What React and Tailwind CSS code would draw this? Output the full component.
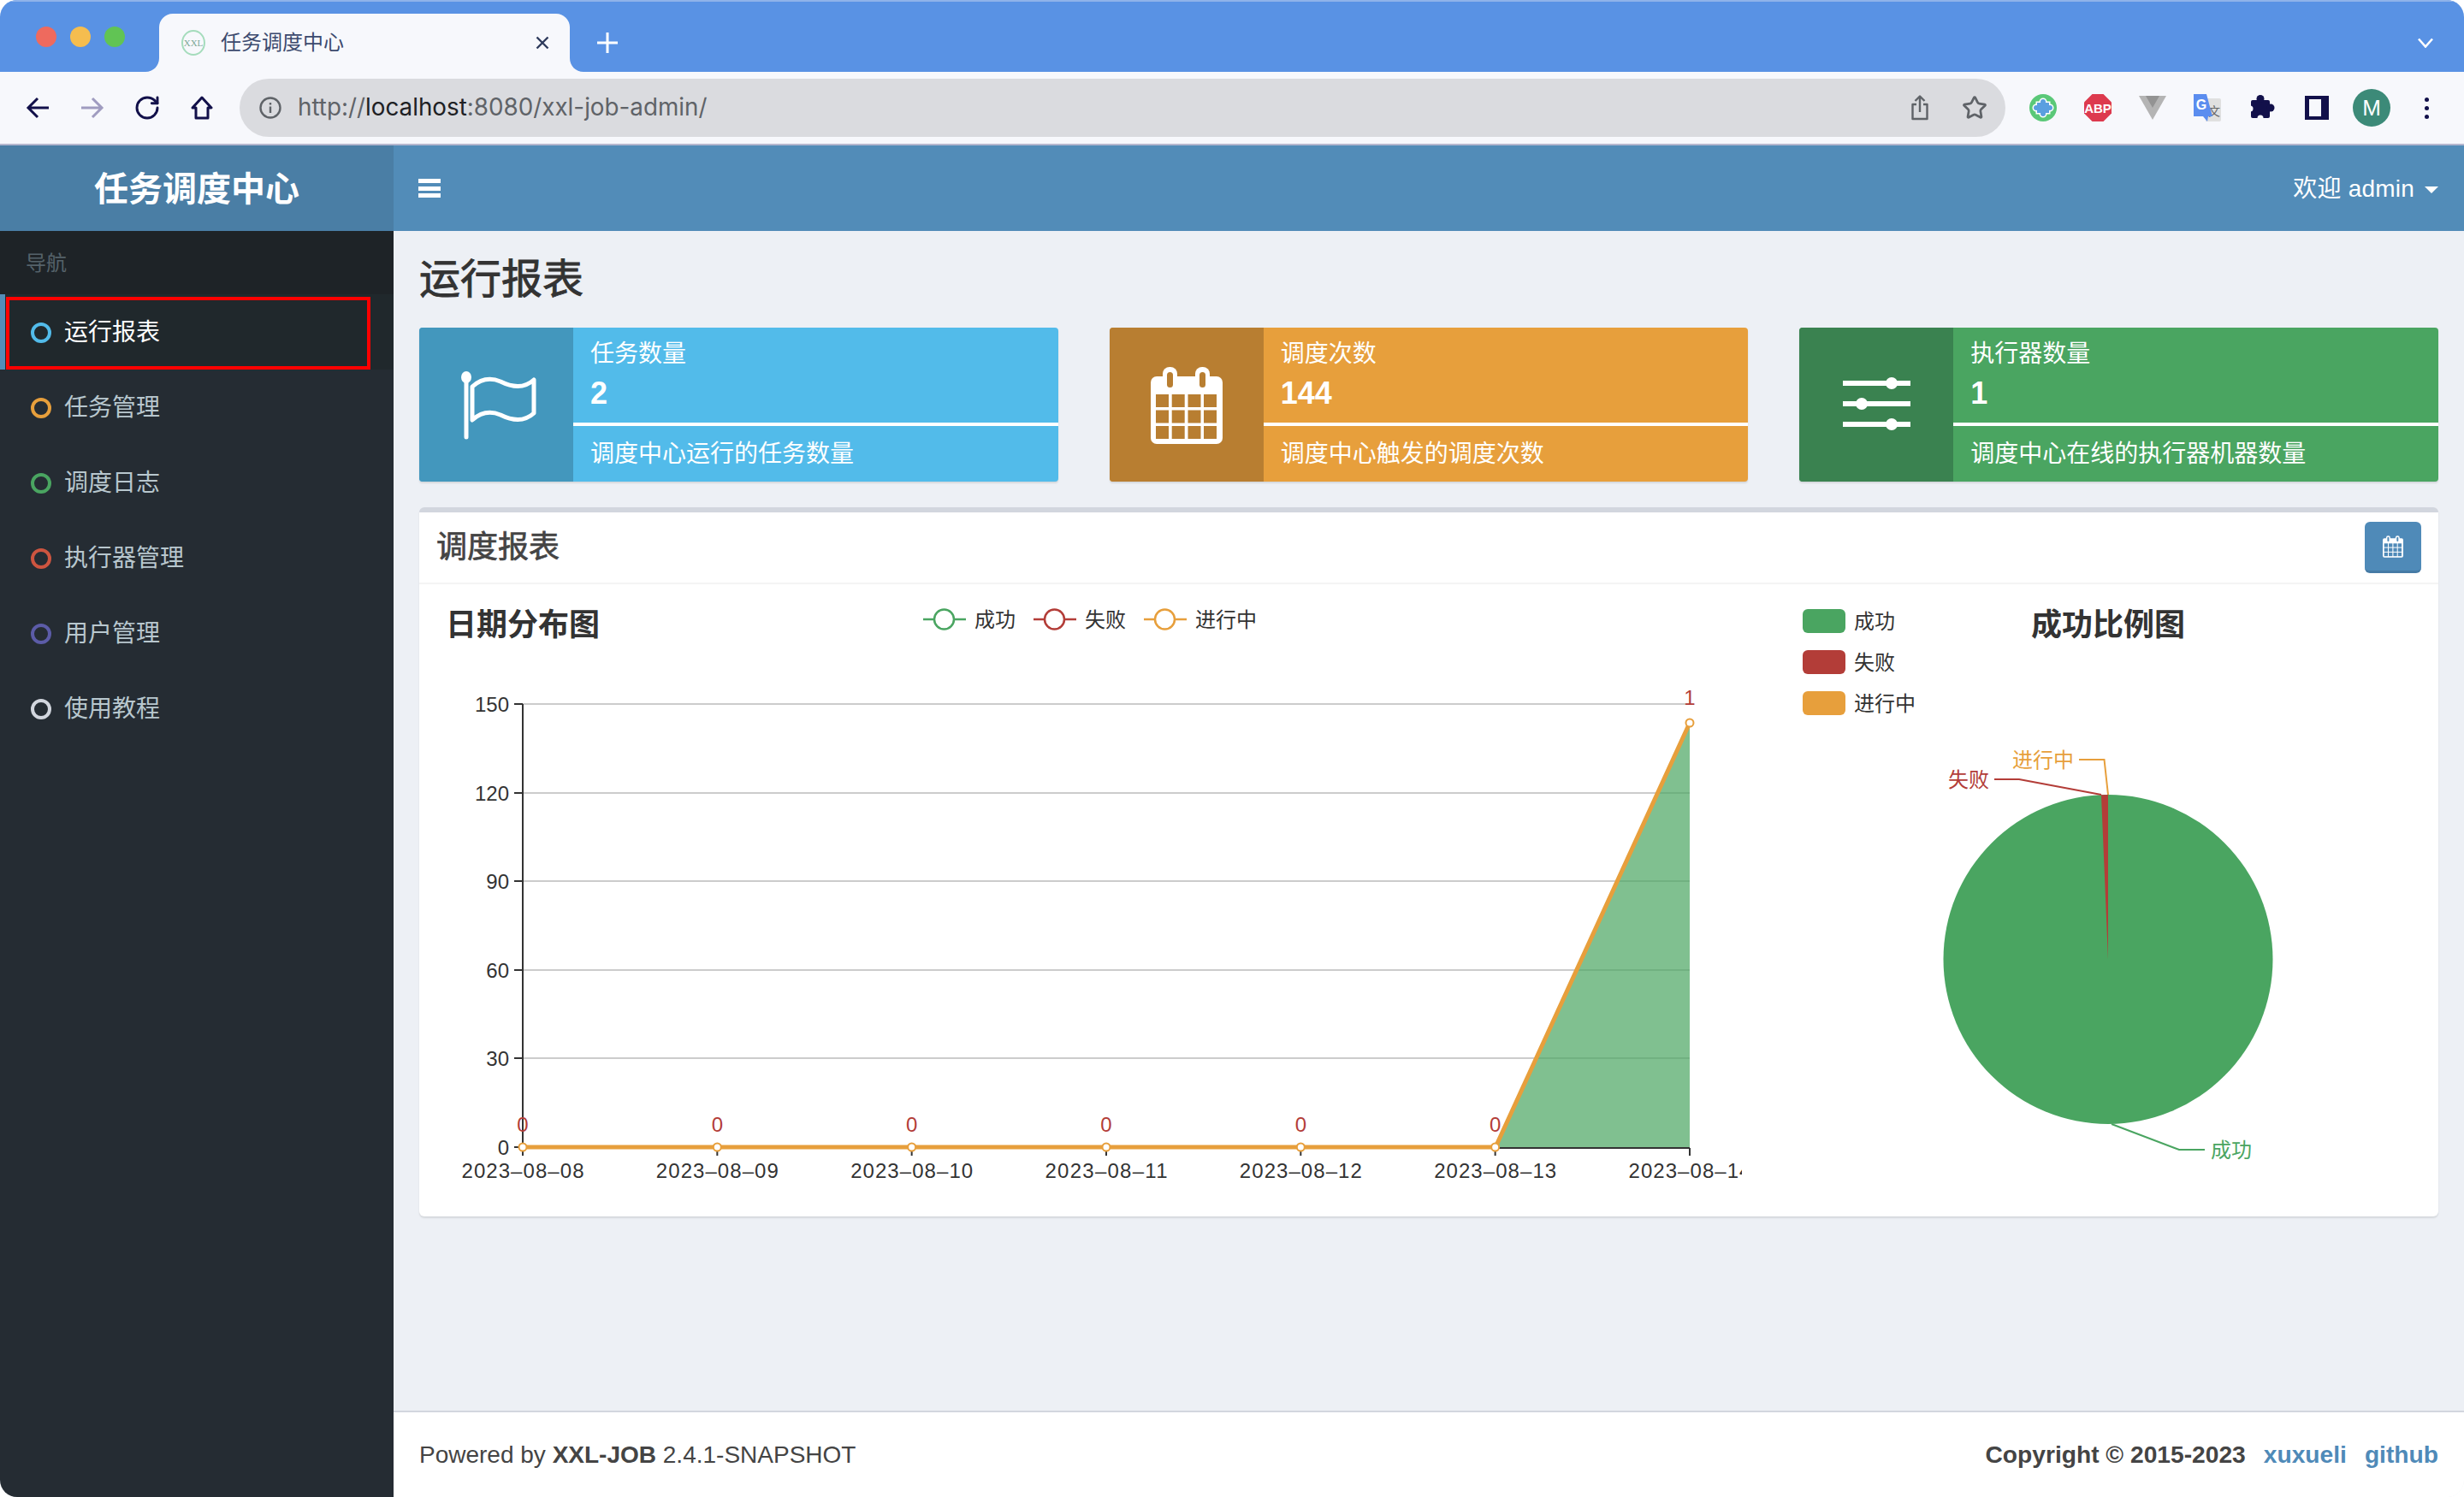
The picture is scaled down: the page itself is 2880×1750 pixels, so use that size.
import { RotateCw, Star } from 'lucide-react';

const MENU = [
  { label: '运行报表', ring: 'border-[#52bbea]', active: true },
  { label: '任务管理', ring: 'border-[#e79f3c]' },
  { label: '调度日志', ring: 'border-[#4aa561]' },
  { label: '执行器管理', ring: 'border-[#cd5540]' },
  { label: '用户管理', ring: 'border-[#5c5ca8]' },
  { label: '使用教程', ring: 'border-[#d2d6de]' },
];

const X_TICKS = ['08', '09', '10', '11', '12', '13', '14'].map((d, i) => ({
  label: `2023–08–${d}`,
  x: 611 + 227.33 * i,
}));
const Y_TICKS = [
  { label: '150', y: 823 },
  { label: '120', y: 927 },
  { label: '90', y: 1030 },
  { label: '60', y: 1134 },
  { label: '30', y: 1237 },
  { label: '0', y: 1341 },
];
const LINE_LEGEND = [
  { label: '成功', x: 1079, color: '#4aa561' },
  { label: '失败', x: 1208, color: '#b33d38' },
  { label: '进行中', x: 1337, color: '#e79f3c' },
];
const PIE_LEGEND = [
  { label: '成功', y: 712, color: '#4aa561' },
  { label: '失败', y: 760, color: '#b33d38' },
  { label: '进行中', y: 808, color: '#e79f3c' },
];

function FlagIcon() {
  return (
    <svg width="180" height="180" viewBox="0 0 180 180" fill="none" stroke="#fff">
      <path d="M55 62V128" strokeWidth="5" strokeLinecap="round" />
      <ellipse cx="55" cy="58" rx="6" ry="7" fill="#fff" stroke="none" />
      <path
        d="M62 69C72 60 83 58 95 63C107 69 122 72 134 61V100C122 111 107 108 95 102C83 97 72 99 62 108Z"
        strokeWidth="5"
        strokeLinejoin="round"
      />
    </svg>
  );
}

function CalendarIcon({ hole, size = 180, viewBox = '0 0 180 180', height }) {
  const cols = [54, 72.7, 91.5, 110];
  const rows = [78, 96.5, 115];
  return (
    <svg width={size} height={height || size} viewBox={viewBox}>
      <rect x="48" y="57" width="84" height="79" rx="7" fill="#fff" />
      <rect x="62" y="46" width="17" height="26" rx="8" fill="#fff" />
      <rect x="100" y="46" width="17" height="26" rx="8" fill="#fff" />
      <rect x="67" y="52" width="7" height="18" rx="3.5" fill={hole} />
      <rect x="105" y="52" width="7" height="18" rx="3.5" fill={hole} />
      {rows.map((r) => cols.map((c) => <rect key={`${r}-${c}`} x={c} y={r} width="15" height="15" fill={hole} />))}
    </svg>
  );
}

function SlidersIcon() {
  return (
    <svg width="180" height="180" viewBox="0 0 180 180" fill="#fff">
      <rect x="51" y="62" width="79" height="6" />
      <rect x="51" y="86" width="79" height="6" />
      <rect x="51" y="110" width="79" height="6" />
      <circle cx="108" cy="65" r="7" />
      <circle cx="73" cy="89" r="7" />
      <circle cx="108" cy="113" r="7" />
    </svg>
  );
}

function InfoBox({ bg, iconBg, icon, title, value, desc }) {
  return (
    <div className={`flex h-[180px] overflow-hidden rounded-[4px] text-white shadow-[0_2px_2px_rgba(0,0,0,0.1)] ${bg}`}>
      <div className={`flex w-[180px] shrink-0 items-center justify-center ${iconBg}`}>{icon}</div>
      <div className="flex flex-1 flex-col">
        <div className="flex h-[60px] items-center px-[20px] pt-[2px] text-[28px] leading-[40px]">{title}</div>
        <div className="flex h-[51px] items-center px-[20px] pb-[17px] text-[36px] font-bold leading-none">{value}</div>
        <div className="h-[4px] bg-white" />
        <div className="flex flex-1 items-center px-[20px] text-[28px] leading-[40px]">{desc}</div>
      </div>
    </div>
  );
}

function LineChart() {
  return (
    <svg width="1526" height="739" viewBox="510 683 1526 739" className="shrink-0">
      <text x="521" y="730" fontSize="36" fontWeight="700" fill="#333" dominantBaseline="central">日期分布图</text>
      {LINE_LEGEND.map((l) => (
        <g key={l.label}>
          <path d={`M${l.x} 724H${l.x + 50}`} stroke={l.color} strokeWidth="2.5" />
          <circle cx={l.x + 24.5} cy="724" r="11.5" fill="#fff" stroke={l.color} strokeWidth="2.5" />
          <text x={l.x + 60} y="724" fontSize="24" fill="#333" dominantBaseline="central">{l.label}</text>
        </g>
      ))}

      {Y_TICKS.map((t) => (
        <g key={t.label}>
          {t.label !== '0' && <path d={`M611 ${t.y}H1975`} stroke="#ccc" strokeWidth="2" />}
          <path d={`M601 ${t.y}H611`} stroke="#333" strokeWidth="2" />
          <text x="595" y={t.y} fontSize="24" fill="#333" textAnchor="end" dominantBaseline="central">{t.label}</text>
        </g>
      ))}

      <path d="M1748 1341L1975 845V1341Z" fill="#4aa561" fillOpacity="0.7" />
      <path d="M611 823V1342M611 1342H1975" stroke="#333" strokeWidth="2" fill="none" />
      {X_TICKS.map((t) => (
        <g key={t.label}>
          <path d={`M${t.x} 1342V1351`} stroke="#333" strokeWidth="2" />
          <text x={t.x} y="1368" fontSize="24" fill="#333" textAnchor="middle" dominantBaseline="central" textLength="143">
            {t.label}
          </text>
        </g>
      ))}

      <path d="M611 1341H1748L1975 845" fill="none" stroke="#e79f3c" strokeWidth="5" strokeLinejoin="round" />
      {X_TICKS.map((t, i) => (
        <g key={t.x}>
          <circle cx={t.x} cy={i === 6 ? 845 : 1341} r="4.5" fill="#fff" stroke="#e79f3c" strokeWidth="2" />
          <text x={t.x} y={i === 6 ? 815 : 1314} fontSize="24" fill="#b33d38" textAnchor="middle" dominantBaseline="central">
            {i === 6 ? '1' : '0'}
          </text>
        </g>
      ))}
    </svg>
  );
}

function PieChart() {
  return (
    <svg width="814" height="739" viewBox="2036 683 814 739" className="shrink-0">
      {PIE_LEGEND.map((l) => (
        <g key={l.label}>
          <rect x="2107" y={l.y} width="50" height="28" rx="6" fill={l.color} />
          <text x="2167" y={l.y + 14} fontSize="24" fill="#333" dominantBaseline="central">{l.label}</text>
        </g>
      ))}
      <text x="2374" y="730" fontSize="36" fontWeight="700" fill="#333" dominantBaseline="central">成功比例图</text>

      <circle cx="2464" cy="1121.5" r="192.5" fill="#4aa561" />
      <path d="M2464 1121.5L2456 929.2A192.5 192.5 0 0 1 2464 929Z" fill="#b33d38" />

      <path d="M2331 911H2360L2456 929" fill="none" stroke="#b33d38" strokeWidth="2" />
      <text x="2277" y="911" fontSize="24" fill="#b33d38" dominantBaseline="central">失败</text>
      <path d="M2430 888H2459.5L2464 929" fill="none" stroke="#e79f3c" strokeWidth="2" />
      <text x="2352" y="888" fontSize="24" fill="#e79f3c" dominantBaseline="central">进行中</text>
      <path d="M2468 1314L2547 1344H2577" fill="none" stroke="#4aa561" strokeWidth="2" />
      <text x="2584" y="1344" fontSize="24" fill="#4aa561" dominantBaseline="central">成功</text>
    </svg>
  );
}

function PuzzleShape({ fill, cut }) {
  return (
    <>
      <rect x="1" y="7" width="22" height="21" rx="2" fill={fill} />
      <circle cx="12" cy="5.5" r="4.5" fill={fill} />
      <circle cx="24" cy="16" r="4.5" fill={fill} />
      <circle cx="12" cy="28" r="3.5" fill={cut} />
      <circle cx="0" cy="17" r="3.5" fill={cut} />
    </>
  );
}

function BrowserChrome() {
  return (
    <>
      {/* Tab strip */}
      <div className="flex h-[84px] shrink-0 border-t-2 border-[#8fb3ea] bg-[#5992e4] pt-[14px]">
        <div className="flex w-[186px] shrink-0 items-start gap-[16px] pl-[42px] pt-[15px]">
          <span className="size-[24px] rounded-full bg-[#ee6a5e]" />
          <span className="size-[24px] rounded-full bg-[#f5bd4f]" />
          <span className="size-[24px] rounded-full bg-[#61c454]" />
        </div>
        <div className="relative flex w-[480px] shrink-0 items-center rounded-t-[16px] bg-[#f7f8fc] pl-[26px] pr-[24px]">
          <svg width="16" height="16" viewBox="0 0 16 16" className="absolute -left-[16px] bottom-0">
            <path d="M16 0V16H0C9 16 16 9 16 0Z" fill="#f7f8fc" />
          </svg>
          <svg width="16" height="16" viewBox="0 0 16 16" className="absolute -right-[16px] bottom-0">
            <path d="M0 0V16H16C7 16 0 9 0 0Z" fill="#f7f8fc" />
          </svg>
          <svg width="28" height="30" viewBox="0 0 28 30" className="shrink-0">
            <ellipse cx="14" cy="15" rx="13" ry="14" fill="none" stroke="#a5dcbc" strokeWidth="2" />
            <text x="14" y="19" fontSize="11" fill="#7fa898" textAnchor="middle" fontFamily="'Liberation Serif', serif">XXL</text>
          </svg>
          <span className="ml-[18px] text-[24px] text-[#3c4a6e]">任务调度中心</span>
          <svg width="16" height="16" viewBox="0 0 16 16" className="ml-auto" stroke="#2e3a5c" strokeWidth="2.4">
            <path d="M1.5 1.5L14.5 14.5M14.5 1.5L1.5 14.5" />
          </svg>
        </div>
        <div className="ml-[32px] flex items-center">
          <svg width="24" height="24" viewBox="0 0 24 24" stroke="#fff" strokeWidth="3">
            <path d="M12 0V24M0 12H24" />
          </svg>
        </div>
        <div className="ml-auto flex items-center pr-[36px]">
          <svg width="18" height="12" viewBox="0 0 18 12" fill="none" stroke="#fff" strokeWidth="2.6">
            <path d="M1 1.5L9 10.5L17 1.5" />
          </svg>
        </div>
      </div>

      {/* Toolbar */}
      <div className="flex h-[86px] shrink-0 items-center border-b-2 border-[#b5b7cf] bg-[#f7f8fc] pl-[12px]">
        <div className="flex h-full w-[64px] items-center justify-center">
          <svg width="28" height="26" viewBox="0 0 28 26" fill="none" stroke="#12104a" strokeWidth="3">
            <path d="M27 13H3M14 2L3 13L14 24" />
          </svg>
        </div>
        <div className="flex h-full w-[64px] items-center justify-center">
          <svg width="28" height="26" viewBox="0 0 28 26" fill="none" stroke="#a09cc0" strokeWidth="3">
            <path d="M1 13H25M14 2L25 13L14 24" />
          </svg>
        </div>
        <div className="flex h-full w-[64px] items-center justify-center">
          <RotateCw size={32} strokeWidth={2.2} color="#12104a" />
        </div>
        <div className="flex h-full w-[64px] items-center justify-center">
          <svg width="26" height="28" viewBox="0 0 26 28" fill="none" stroke="#12104a" strokeWidth="3">
            <path d="M13 2L24 14H20V26H6V14H2Z" strokeLinejoin="round" />
          </svg>
        </div>

        <div className="ml-[12px] flex h-[68px] w-[2064px] items-center rounded-full bg-[#dadbdf] pl-[23px] pr-[4px]">
          <svg width="26" height="26" viewBox="0 0 26 26" fill="none" stroke="#5f6368" strokeWidth="2.4" className="shrink-0">
            <circle cx="13" cy="13" r="11.5" />
            <path d="M13 11.5V19M13 7V9.5" />
          </svg>
          <span className="ml-[19px] font-['Inter',sans-serif] text-[27.8px] text-[#5f6368]">
            http://<span className="text-[#202124]">localhost</span>:8080/xxl-job-admin/
          </span>
          <div className="ml-auto flex h-full w-[64px] items-center justify-center">
            <svg width="22" height="30" viewBox="0 0 22 30" fill="none" stroke="#5f6368" strokeWidth="2.4">
              <path d="M11 20V2M5.5 7L11 1.5L16.5 7M7 11H2.5V28H19.5V11H15" strokeLinejoin="round" />
            </svg>
          </div>
          <div className="flex h-full w-[64px] items-center justify-center">
            <Star size={30} strokeWidth={2.2} color="#5f6368" />
          </div>
        </div>

        <div className="ml-[12px] flex h-full w-[64px] items-center justify-center">
          <svg width="32" height="32" viewBox="0 0 32 32">
            <circle cx="16" cy="16" r="16" fill="#5ac878" />
            <g transform="translate(3 3)" stroke="#fff" strokeWidth="3">
              <rect x="6" y="7" width="14" height="12" />
              <circle cx="13" cy="6" r="3" />
              <circle cx="21" cy="13" r="3" />
              <circle cx="13" cy="20" r="3" />
              <circle cx="5" cy="13" r="3" />
            </g>
            <g transform="translate(3 3)" fill="#5a9fe0">
              <rect x="6" y="7" width="14" height="12" />
              <circle cx="13" cy="6" r="3" />
              <circle cx="21" cy="13" r="3" />
              <circle cx="13" cy="20" r="3" />
              <circle cx="5" cy="13" r="3" />
            </g>
          </svg>
        </div>
        <div className="flex h-full w-[64px] items-center justify-center">
          <svg width="32" height="32" viewBox="0 0 32 32">
            <path d="M9.5 0H22.5L32 9.5V22.5L22.5 32H9.5L0 22.5V9.5Z" fill="#dd3a4e" />
            <text x="16" y="21.5" fontSize="15" fontWeight="700" fill="#fff" textAnchor="middle">ABP</text>
          </svg>
        </div>
        <div className="flex h-full w-[64px] items-center justify-center">
          <svg width="32" height="28" viewBox="0 0 32 28">
            <path d="M0 0H32L16 28Z" fill="#b4b4b4" />
            <path d="M8 0H24L16 14Z" fill="#939393" />
          </svg>
        </div>
        <div className="flex h-full w-[64px] items-center justify-center">
          <svg width="32" height="32" viewBox="0 0 32 32">
            <path d="M12 5H30A2 2 0 0 1 32 7V30A2 2 0 0 1 30 32H14Z" fill="#e0e0e0" />
            <text x="24" y="25" fontSize="14" fill="#666" textAnchor="middle">文</text>
            <path d="M0 0H15L22 26H17L16 32L11 26H0Z" fill="#5b8def" />
            <text x="9" y="18" fontSize="16" fontWeight="700" fill="#fff" textAnchor="middle">G</text>
          </svg>
        </div>
        <div className="flex h-full w-[64px] items-center justify-center">
          <svg width="29" height="32" viewBox="0 0 29 32">
            <PuzzleShape fill="#12104a" cut="#f7f8fc" />
          </svg>
        </div>
        <div className="flex h-full w-[64px] items-center justify-center">
          <div className="flex size-[28px] bg-[#12104a] py-[4px] pl-[5px]">
            <div className="h-full w-[14px] bg-[#f7f8fc]" />
          </div>
        </div>
        <div className="flex h-full w-[64px] items-center justify-center">
          <div className="flex size-[44px] items-center justify-center rounded-full bg-[#3c8a78] text-[26px] text-white">M</div>
        </div>
        <div className="flex h-full w-[64px] flex-col items-center justify-center gap-[5px]">
          <span className="size-[5px] rounded-full bg-[#12104a]" />
          <span className="size-[5px] rounded-full bg-[#12104a]" />
          <span className="size-[5px] rounded-full bg-[#12104a]" />
        </div>
      </div>
    </>
  );
}

export default function App() {
  return (
    <div className="flex h-[1750px] w-[2880px] flex-col overflow-hidden rounded-[20px] bg-[#edf0f5] [font-family:'Liberation_Sans','Noto_Sans_CJK_SC',sans-serif]">
      <BrowserChrome />

      <div className="flex min-h-0 flex-1">
        {/* Sidebar */}
        <aside className="flex w-[460px] shrink-0 flex-col bg-[#252c33]">
          <div className="flex h-[100px] items-center justify-center bg-[#4a7ea5] pt-[2px] text-[40px] font-bold text-white">任务调度中心</div>
          <div className="flex h-[74px] items-center bg-[#1e2327] pl-[30px] pt-[2px] text-[24px] text-[#55626a]">导航</div>
          {MENU.map((item) => (
            <div
              key={item.label}
              className={`relative flex h-[88px] items-center gap-[15px] pt-[2px] text-[28px] ${
                item.active ? 'border-l-[6px] border-[#528cb8] bg-[#20282c] pl-[30px] text-white' : 'pl-[36px] text-[#b8c7ce]'
              }`}
            >
              <span className={`size-[24px] rounded-full border-[4px] ${item.ring}`} />
              {item.label}
              {item.active && <div className="absolute left-[1px] top-[3px] h-[85px] w-[426px] border-[4px] border-[#f00]" />}
            </div>
          ))}
        </aside>

        {/* Main */}
        <div className="flex min-w-0 flex-1 flex-col">
          <header className="flex h-[100px] shrink-0 items-center justify-between bg-[#528cb8] pl-[29px] pr-[30px] text-white">
            <div className="flex h-[22px] w-[26px] flex-col justify-between">
              <span className="h-[5px] bg-white" />
              <span className="h-[5px] bg-white" />
              <span className="h-[5px] bg-white" />
            </div>
            <div className="flex items-center gap-[12px] pt-[2px] text-[28px] tracking-[0.2px]">
              欢迎 admin
              <span className="mt-[2px] border-x-[8px] border-t-[8px] border-x-transparent border-t-white" />
            </div>
          </header>

          <main className="flex-1 px-[30px]">
            <h1 className="flex h-[110px] items-center pt-[4px] text-[48px] text-[#333] [-webkit-text-stroke:0.9px_#333]">运行报表</h1>
            <div className="mt-[3px] grid grid-cols-3 gap-[60px]">
              <InfoBox
                bg="bg-[#52bbea]"
                iconBg="bg-[#4397bd]"
                icon={<FlagIcon />}
                title="任务数量"
                value="2"
                desc="调度中心运行的任务数量"
              />
              <InfoBox
                bg="bg-[#e79f3c]"
                iconBg="bg-[#b87e31]"
                icon={<CalendarIcon hole="#b87e31" />}
                title="调度次数"
                value="144"
                desc="调度中心触发的调度次数"
              />
              <InfoBox
                bg="bg-[#4aa561]"
                iconBg="bg-[#3a8250]"
                icon={<SlidersIcon />}
                title="执行器数量"
                value="1"
                desc="调度中心在线的执行器机器数量"
              />
            </div>

            <section className="mt-[30px] h-[829px] overflow-hidden rounded-[6px] border-t-[6px] border-[#d2d6de] bg-white shadow-[0_2px_2px_rgba(0,0,0,0.1)]">
              <div className="flex h-[84px] items-center justify-between border-b-2 border-[#f4f4f4] pl-[20px] pr-[20px]">
                <h3 className="text-[36px] text-[#444] [-webkit-text-stroke:0.7px_#444]">调度报表</h3>
                <button className="flex h-[60px] w-[66px] items-center justify-center rounded-[6px] border-b-[3px] border-[#467ba5] bg-[#4f8ab8]">
                  <CalendarIcon hole="#4f8ab8" size={24} height={26} viewBox="48 46 84 90" />
                </button>
              </div>
              <div className="flex pl-[20px]">
                <LineChart />
                <PieChart />
              </div>
            </section>
          </main>

          <footer className="flex h-[101px] shrink-0 items-center justify-between border-t-2 border-[#d2d6de] bg-white px-[30px] text-[28px] text-[#444]">
            <div>
              Powered by <b>XXL-JOB</b> 2.4.1-SNAPSHOT
            </div>
            <div className="flex gap-[21px] text-[28.2px] font-bold">
              <span>Copyright © 2015-2023</span>
              <span className="text-[#4f8ab8]">xuxueli</span>
              <span className="text-[#4f8ab8]">github</span>
            </div>
          </footer>
        </div>
      </div>
    </div>
  );
}
